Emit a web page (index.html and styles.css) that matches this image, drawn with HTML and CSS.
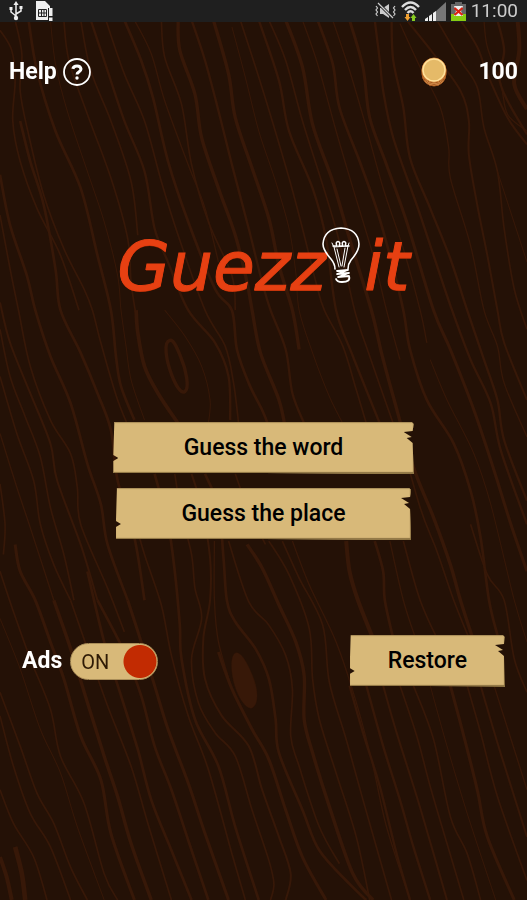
FILE: index.html
```html
<!DOCTYPE html>
<html lang="en">
<head>
<meta charset="utf-8">
<meta name="viewport" content="width=device-width, initial-scale=1">
<title>Guezz it</title>
<link rel="stylesheet" href="styles.css">
</head>
<body>
<svg class="wood" viewBox="0 0 1568 2678" preserveAspectRatio="xMidYMid slice" aria-hidden="true">
  <g id="grain" transform="translate(0 60)"></g>
  <path class="knot-ring" transform="translate(0 60)" d="M505 953C485 958 495 1013 510 1053C525 1093 540 1112 550 1105C565 1095 553 1038 538 1003C526 973 515 948 505 953Z"/>
  <path class="knot" transform="translate(0 60)" d="M703 1882C685 1885 685 1940 700 1985C715 2030 740 2055 753 2045C771 2030 768 1985 747 1940C732 1905 717 1882 703 1882Z"/>
</svg>
<div class="screen">
  <div class="status">
    <div class="status-group">
      <svg width="14" height="20" viewBox="0 0 14 20" class="usb"><path d="M7 3v14M2 8v3l5 4M12 7v3l-5 3"/><path class="solid" d="M7 0l2.600 4H4.400zM.5 6h3v3h-3zM10.500 5h3v3h-3z"/><circle class="solid" cx="7" cy="17" r="2.200"/></svg>
      <svg width="17" height="20" viewBox="0 0 17 20"><path fill="#eee" d="M0 0h9l5 5v2h-2v12H0z"/><path fill="none" stroke="#222" d="M2.500 8.500h8v7h-8zM2.500 12h8M5.500 8.500v7M8 8.500v7"/><path fill="#eee" d="M13 7h3.500v8H13zM13 16.500h3.500V20H13z"/></svg>
    </div>
    <div class="status-group status-right">
      <svg width="21" height="18" viewBox="0 0 21 18"><path fill="#ccc" d="M5 6h3l6-4v14l-6-4H5z"/><path d="M3 1l15 15" stroke="#222" stroke-width="3"/><path d="M3 1l15 15M1 4l1.500 2L1 8l1.500 2L1 12l1.500 2M20 4l-1.500 2L20 8l-1.500 2 1.500 2-1.500 2" fill="none" stroke="#ccc" stroke-width="1.200"/></svg>
      <svg width="19" height="20" viewBox="0 0 19 20"><path d="M1 6q8.500-9 17 0M4 9q5.500-6 11 0M6.500 12q3-3.500 6 0" fill="none" stroke="#ddd" stroke-width="2.400"/><path fill="#f0a030" d="M5 13h3v3h1.500L6.500 20l-3-4H5z"/><path fill="#8c2" d="M11 20h3v-3h1.500l-3-4-3 4H11z"/></svg>
      <svg width="21" height="19" viewBox="0 0 21 19"><path fill="#777" d="M21 0v19H9V11z"/><path fill="#eee" d="M0 19v-2l3-2v4zM4 19v-5l3-2v7zM8 19v-8l3-2v10z"/></svg>
      <svg width="15" height="19" viewBox="0 0 15 19"><path fill="#666" d="M4 0h7v2h4v17H0V2h4z"/><path fill="#8c1" d="M0 12h15v7H0z"/><path fill="#eee" d="M3 4h9l-2 5 2 5H3l2-5z"/><path d="M3.500 6l8 7M11.500 6l-8 7" stroke="#d21" stroke-width="2.300"/></svg>
      <span class="clock">11:00</span>
    </div>
  </div>

  <header class="top">
    <button class="help" type="button">Help
      <svg width="28" height="28" viewBox="0 0 28 28" aria-hidden="true"><circle cx="14" cy="14" r="13"/><path d="M9.800 10.800Q10.500 8 14 8T18 11Q18 12.800 16 13.800T14 16.500"/><circle class="dot" cx="14" cy="20" r="1.700"/></svg>
    </button>
    <div class="coins">
      <svg width="28" height="30" viewBox="0 0 28 30" aria-hidden="true"><g fill="#e8a863" stroke="#a85a20"><circle cx="14" cy="17" r="12"/><circle cx="14" cy="15.500" r="12"/><circle cx="14" cy="14" r="12"/></g><circle cx="14" cy="13" r="12" fill="#e5ba68" stroke="#c87830"/><circle cx="14" cy="13" r="11" fill="none" stroke="#ffe09a" stroke-width="1.500"/></svg>
      <span>100</span>
    </div>
  </header>

  <main>
    <h1 class="logo">
      <span>Guezz</span>
      <svg class="bulb" width="38" height="57" viewBox="0 0 38 57" aria-hidden="true">
        <path d="M13 42Q13 37 9 32Q1 23 1 17Q2 2 19 1Q36 2 37 17Q37 24 29 33Q26 37 26 42" stroke-width="1.600"/>
        <path d="M10 16l2 4 14-1 1-3M12 20l5 20M26 19l-4 21M15 22l4 17M23 21l-3 18" stroke-width="1"/>
        <path d="M11 19l4 0q-2-4 1-4.500 3 .5 1 4.500h4q-2-4 1-4.500 3 .5 1 4.500l4 0" stroke-width="1.500"/>
        <path d="M15 44l11-1-11 4 12-1-11 4 11-1q2 6-7 6-5 0-6-3" stroke-width="1.800"/>
      </svg>
      <span>it</span>
    </h1>

    <nav class="modes">
      <button class="board word" type="button">Guess the word</button>
      <button class="board place" type="button">Guess the place</button>
    </nav>

    <div class="options">
      <label class="ads">Ads
        <span class="switch"><input type="checkbox" checked><span class="state">ON</span></span>
      </label>
      <button class="board restore" type="button">Restore</button>
    </div>
  </main>
</div>
<script src="grain.js"></script>
</body>
</html>
```
FILE: styles.css
```css
* {
  box-sizing: border-box;
}

body {
  margin: 0;
  background: #241106;
  color: #fff;
  font: 500 23px/30px Roboto, "Open Sans", sans-serif;
}

button {
  font: inherit;
  color: inherit;
  border: 0;
  padding: 0;
  background: none;
  cursor: pointer;
}

.wood {
  position: fixed;
  inset: 0;
  width: 100%;
  height: 100%;
  z-index: -1;
}

.wood path {
  fill: none;
  stroke: #371808;
}

.wood .knot-ring {
  stroke-width: 10;
}

.wood .knot {
  fill: #371808;
}

.screen {
  min-height: 100vh;
  display: flex;
  flex-direction: column;
}

.status {
  height: 22px;
  padding: 0 9px;
  display: flex;
  justify-content: space-between;
  align-items: center;
  background: #1f1f1f;
}

.status-group {
  display: flex;
  align-items: center;
  gap: 13px;
}

.status-right {
  gap: 5px;
}

.usb path {
  fill: none;
  stroke: #eee;
  stroke-width: 1.5;
}

.usb .solid {
  fill: #eee;
  stroke: none;
}

.clock {
  font-size: 19px;
  font-weight: 400;
  line-height: 22px;
  color: #ccc;
}

.top {
  padding: 35px 9px 0;
  display: flex;
  justify-content: space-between;
  font-weight: 700;
}

.help {
  display: flex;
  align-items: center;
  gap: 6px;
}

.help svg {
  fill: none;
  stroke: #fff;
  stroke-width: 1.8;
}

.help path {
  stroke-width: 3;
}

.help .dot {
  fill: #fff;
  stroke: none;
}

.coins {
  display: flex;
  align-items: center;
  gap: 30px;
}

.logo {
  margin: 140px 0 0;
  display: flex;
  justify-content: center;
  font: oblique 400 68px/80px "DejaVu Sans", sans-serif;
  color: #e64012;
  -webkit-text-stroke: 1px #e64012;
  text-shadow: 0 1px #a52a06;
}

.bulb {
  margin: 0 4px 0 -4px;
  fill: none;
  stroke: #fff;
  stroke-linecap: round;
  stroke-linejoin: round;
}

.modes {
  margin-top: 115px;
  display: flex;
  flex-direction: column;
  align-items: center;
  gap: 14px;
}

.board {
  height: 52px;
  color: #000;
  background: #d8b979;
  box-shadow: inset -1px -2px 1px #8d7443, inset 0 1px 1px #a98d58;
  clip-path: polygon(1px 0, calc(100% - 2px) 0, 100% 2px, calc(100% - 1px) 9px, calc(100% - 10px) 10px, calc(100% - 2px) 15px, calc(100% - 7px) 16px, calc(100% - 1px) 21px, 100% 100%, 50% calc(100% - 1px), 0 calc(100% - 1px), 0 39px, 5px 36px, 0 33px);
}

.word {
  width: 57%;
}

.place {
  width: 56%;
}

.options {
  margin-top: 95px;
  padding: 0 22px;
  display: flex;
  justify-content: space-between;
  align-items: center;
}

.ads {
  display: flex;
  align-items: center;
  gap: 8px;
  font-weight: 700;
}

.switch {
  position: relative;
  display: flex;
}

.switch input {
  appearance: none;
  width: 88px;
  height: 37px;
  margin: 0;
  border: 1px solid #a98d58;
  border-radius: 19px;
  background: radial-gradient(circle at 69px 50%, #c22b02 16px, #d8b979 17px);
}

.state {
  position: absolute;
  left: 11px;
  top: 4px;
  font-size: 20px;
  font-weight: 400;
  color: #2e1a05;
}

.restore {
  padding: 0 38px;
}
```
FILE: grain.js
```js
// Wood grain veins: stroke width, then x,y waypoints from top to bottom.
const veins = [
  [5, 0,30, 35,90, 45,180, 38,300, 60,420, 110,560, 180,700, 235,863],
  [5, 45,0, 65,100, 60,210, 85,340, 130,520, 190,680, 250,800, 275,863, 300,960, 350,1130, 400,1250],
  [8, 85,0, 110,150, 165,330, 240,500, 290,700, 330,863, 345,1000, 360,1090, 400,1190],
  [3, 150,0, 165,130, 200,270, 260,450, 310,600, 350,760, 360,863, 375,970, 390,1070, 430,1190],
  [5, 190,0, 205,120, 260,280, 330,470, 380,650, 390,780, 405,880],
  [5, 240,0, 270,150, 330,300, 390,480, 410,640],
  [7, 270,0, 320,150, 370,300, 430,450, 460,620, 500,720, 560,863, 640,960, 680,1060, 685,1190],
  [5, 315,0, 370,160, 430,300, 480,480, 530,640, 610,863, 670,970, 695,1080, 710,1200],
  [8, 370,0, 420,120, 455,230, 500,420, 560,600, 640,800, 690,863, 705,980, 740,1080, 780,1160, 800,1210],
  [4, 400,0, 450,100, 490,240, 560,430, 610,560, 650,720],
  [5, 480,0, 490,110, 540,250, 570,430, 620,600, 690,760, 700,863],
  [10, 530,0, 535,90, 580,220, 600,350, 650,500, 700,640, 735,780, 750,863, 775,990, 830,1130, 850,1220],
  [7, 570,0, 610,120, 650,270, 690,430, 740,620, 780,780, 805,863, 850,980, 870,1110, 905,1200],
  [10, 635,0, 680,160, 700,290, 750,440, 800,590, 830,730, 870,863, 890,980],
  [3, 690,20, 730,170, 770,330, 820,480, 860,620, 880,750, 890,863, 930,990, 980,1120, 1020,1200],
  [5, 715,0, 770,170, 810,300, 860,470, 900,620, 940,780, 965,863, 1020,970, 1060,1100, 1090,1200],
  [7, 770,0, 830,180, 860,330, 930,500, 970,650, 1000,863, 1050,1000, 1130,1200],
  [5, 800,0, 850,120, 900,300, 960,490, 1010,660, 1055,863, 1100,1000, 1170,1200],
  [10, 850,0, 900,140, 930,310, 990,480, 1040,650, 1105,863, 1135,990, 1170,1120, 1230,1330, 1290,1480, 1340,1620, 1370,1726, 1410,1850],
  [4, 900,0, 945,130, 1000,330, 1050,500, 1110,700, 1150,863, 1190,1010],
  [8, 945,0, 990,130, 1010,260, 1070,420, 1120,560, 1160,700, 1200,863, 1220,980, 1270,1130, 1350,1260, 1400,1400, 1430,1540, 1455,1726, 1480,1830],
  [4, 990,0, 1040,150, 1090,320, 1140,500, 1200,680, 1250,863, 1270,960],
  [9, 1040,0, 1080,140, 1100,290, 1150,430, 1210,600, 1290,863, 1340,980, 1410,1160, 1470,1340, 1520,1500, 1568,1640],
  [7, 1115,0, 1130,120, 1140,210, 1170,350, 1240,550, 1290,700, 1345,863, 1400,1010, 1460,1140, 1490,1280, 1568,1500],
  [7, 1165,0, 1170,120, 1200,260, 1220,410, 1280,560, 1340,710, 1390,863, 1440,1010, 1480,1130, 1500,1250, 1568,1430],
  [4, 1190,10, 1250,140, 1310,260, 1335,380, 1340,470, 1400,670, 1440,863, 1480,970, 1500,1080, 1568,1240],
  [6, 1210,0, 1290,100, 1370,210, 1395,300, 1395,400, 1420,550, 1450,700, 1480,863, 1500,960, 1568,1130],
  [5, 1300,0, 1370,120, 1420,200, 1440,320, 1480,450, 1500,620, 1530,800, 1568,920],
  [6, 1370,0, 1420,80, 1450,160, 1510,290, 1568,370],
  [4, 1440,0, 1450,80, 1490,190, 1510,280, 1568,330],
  [7, 1480,0, 1500,90, 1485,170, 1510,240, 1568,340],
  [12, 1540,0, 1545,90, 1530,190, 1568,265],
  [3, 1480,450, 1568,720],
  [8, 0,460, 30,610, 80,760, 105,863, 150,1000, 210,1140, 260,1320, 300,1440, 320,1560, 380,1726],
  [5, 0,580, 30,740, 55,863, 90,1030, 150,1190, 210,1290, 230,1390, 240,1500, 320,1690, 370,1820],
  [8, 60,300, 90,420, 130,550, 165,740, 180,863, 240,990, 290,1110, 330,1220, 350,1370, 400,1540, 430,1726],
  [6, 0,840, 30,960, 90,1110, 150,1260, 170,1370, 240,1560, 290,1726],
  [5, 0,920, 30,1060, 75,1180, 120,1300, 150,1450, 190,1590, 220,1726],
  [5, 0,1060, 50,1230, 100,1370, 120,1500, 160,1620, 210,1726],
  [4, 0,1230, 50,1390, 90,1510, 160,1726],
  [5, 0,1380, 15,1500, 10,1590],
  [9, 45,1560, 60,1640, 105,1726, 150,1850, 190,1960, 240,2130, 300,2260, 330,2420, 400,2618],
  [5, 0,1640, 40,1760, 90,1900, 150,2050, 180,2190, 250,2330, 310,2540, 350,2618],
  [3, 0,1780, 60,1930, 120,2110, 180,2240, 230,2400, 310,2618],
  [5, 0,2000, 60,2160, 110,2300, 160,2390, 210,2520, 260,2618],
  [5, 0,2070, 40,2220, 90,2360, 150,2460, 210,2618],
  [5, 0,2290, 40,2390, 100,2490, 140,2618],
  [14, 45,2460, 65,2540, 75,2618],
  [12, 0,2490, 20,2550, 35,2618],
  [10, 160,1726, 210,1870, 260,2030, 310,2190, 350,2310, 390,2450, 450,2618],
  [5, 210,1726, 260,1870, 320,2040, 390,2220, 440,2390, 510,2618],
  [8, 260,1640, 310,1850, 360,2010, 410,2170, 450,2320, 510,2470, 570,2618],
  [8, 290,1726, 370,1880, 420,2010, 460,2160, 510,2290, 560,2440, 620,2618],
  [9, 380,1726, 420,1850, 460,1980, 500,2110, 560,2270, 610,2420, 680,2618],
  [5, 390,1450, 430,1590, 480,1740, 510,1890, 560,2070, 620,2230, 690,2480, 730,2618],
  [8, 460,1350, 500,1500, 520,1640, 535,1800, 540,1900, 580,2080, 650,2220, 700,2400, 770,2618],
  [5, 520,1350, 540,1470, 570,1590, 580,1690, 600,1780, 570,1900, 590,2030, 640,2120, 700,2190, 750,2350, 800,2500, 815,2570, 805,2618],
  [6, 570,1350, 600,1450, 625,1600, 625,1726, 605,1840, 610,1960, 660,2070, 740,2160, 780,2290, 830,2430, 865,2540, 850,2618],
  [4, 638,1550, 638,1726, 650,1850, 690,1990],
  [8, 610,1350, 650,1450, 665,1600, 675,1726, 700,1790, 760,1870, 800,1960, 820,2080, 830,2180, 900,2350, 950,2470, 1040,2570, 1090,2618],
  [9, 650,1880, 690,1990, 750,2110, 800,2200, 850,2350, 900,2490, 970,2618],
  [5, 680,1550, 740,1730, 800,1800, 850,1890, 870,1990, 865,2130, 890,2220, 950,2400, 1010,2510],
  [10, 735,1560, 780,1630, 830,1740, 880,1850, 905,1950, 905,2080, 930,2180, 980,2340, 1050,2540, 1110,2618],
  [5, 800,1550, 860,1650, 920,1810, 930,1960, 950,2080, 1000,2240, 1060,2430, 1100,2618],
  [5, 840,1550, 890,1660, 960,1800, 980,1970, 1030,2140, 1080,2320, 1165,2618],
  [4, 870,1550, 920,1680, 1000,1850, 1060,2030, 1110,2220, 1150,2400, 1220,2618],
  [11, 405,863, 410,930, 430,1030, 470,1110, 530,1200],
  [3, 490,863, 550,940, 600,1030, 625,1130, 620,1200],
  [3, 1280,1010, 1330,1130, 1410,1290, 1460,1440, 1530,1726, 1568,1850],
  [5, 1180,1200, 1250,1450, 1300,1580, 1350,1726, 1400,1850],
  [12, 1030,1550, 1040,1640, 1065,1726, 1110,1840],
  [8, 1115,1550, 1140,1640, 1145,1726, 1170,1840],
  [4, 1160,1550, 1200,1726, 1240,1850],
  [5, 1200,1550, 1250,1726, 1310,1860],
  [5, 1400,1500, 1450,1650, 1500,1726, 1530,1900, 1568,2000],
  [7, 1090,1980, 1140,2160, 1190,2320, 1230,2460, 1280,2618],
  [6, 1140,1980, 1180,2120, 1240,2310, 1290,2480, 1330,2618],
  [5, 1190,1980, 1240,2130, 1280,2280, 1330,2450, 1380,2618],
  [5, 1230,1980, 1290,2140, 1340,2370, 1390,2480, 1430,2618],
  [3, 1280,1980, 1330,2160, 1390,2360, 1475,2618],
  [9, 1340,1980, 1380,2130, 1420,2290, 1450,2430, 1530,2618],
  [5, 1390,1980, 1430,2120, 1480,2310, 1568,2560],
  [6, 1430,1980, 1480,2150, 1530,2310, 1568,2430],
  [7, 1040,1980, 1080,2120, 1130,2280, 1180,2480, 1220,2618],
  [4, 1470,1980, 1568,2290],
  [5, 700,1350, 740,1460, 790,1560]
];

// Smooth curve through the waypoints (Catmull-Rom converted to cubic Béziers).
function curve(p) {
  const n = p.length;
  let d = `M${p[0][0]} ${p[0][1]}`;
  for (let i = 0; i < n - 1; i++) {
    const a = p[Math.max(i - 1, 0)], b = p[i], c = p[i + 1], e = p[Math.min(i + 2, n - 1)];
    d += `C${b[0] + (c[0] - a[0]) / 6} ${b[1] + (c[1] - a[1]) / 6} ${c[0] - (e[0] - b[0]) / 6} ${c[1] - (e[1] - b[1]) / 6} ${c[0]} ${c[1]}`;
  }
  return d;
}

const grain = document.getElementById("grain");
for (const [width, ...xy] of veins) {
  const points = [];
  for (let i = 0; i < xy.length; i += 2) points.push([xy[i], xy[i + 1]]);
  const path = document.createElementNS("http://www.w3.org/2000/svg", "path");
  path.setAttribute("d", curve(points));
  path.setAttribute("stroke-width", width);
  grain.append(path);
}
```
